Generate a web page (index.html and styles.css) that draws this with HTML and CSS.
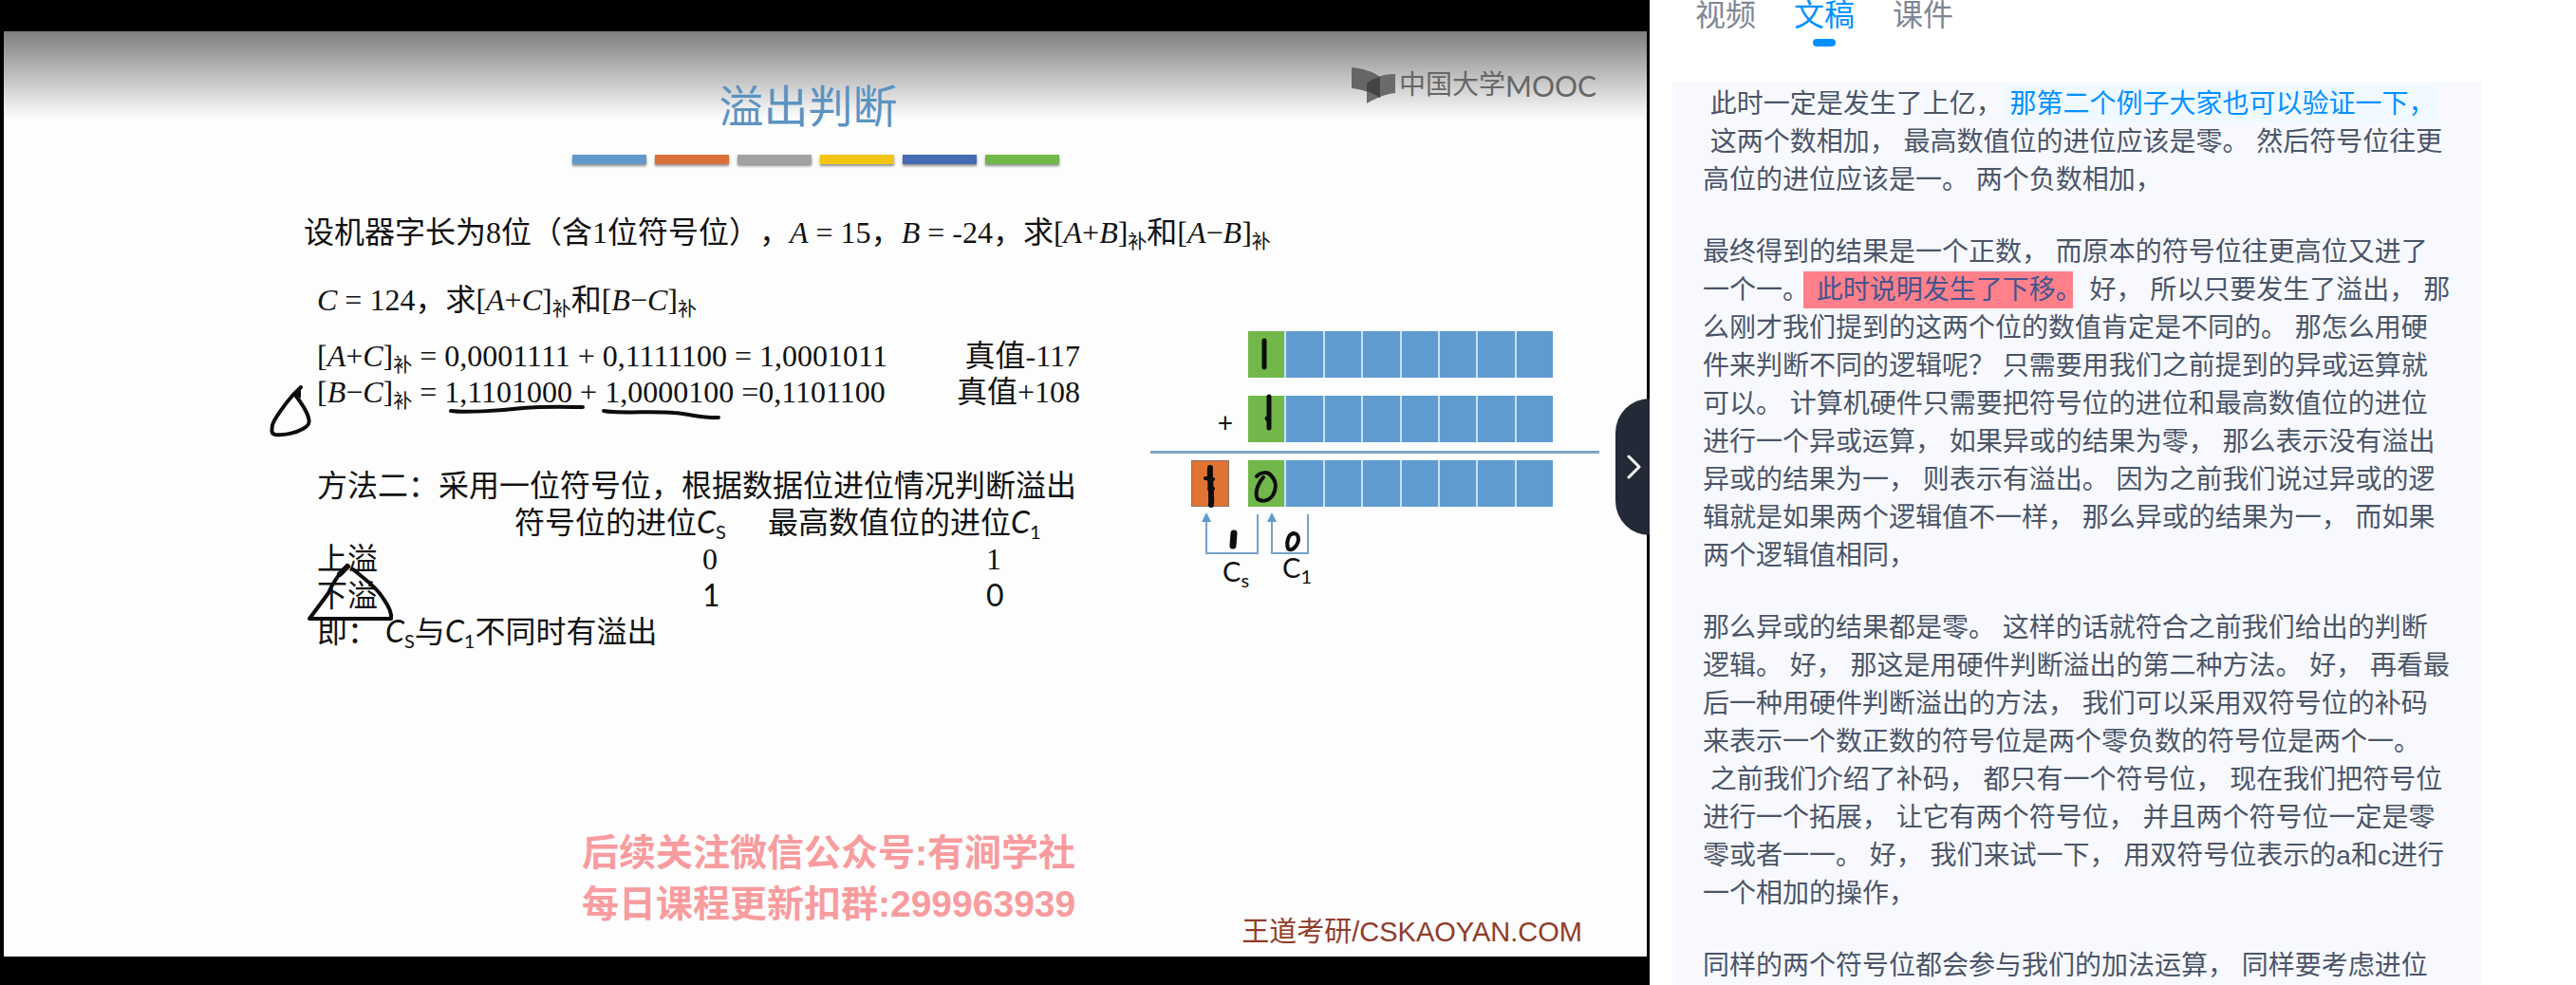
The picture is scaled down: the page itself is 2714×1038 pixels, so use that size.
FILE: index.html
```html
<!DOCTYPE html>
<html lang="zh-CN">
<head>
<meta charset="utf-8">
<title>溢出判断</title>
<link rel="stylesheet" href="styles.css">
</head>
<body>
<div class="page">
  <main class="stage">
    <article class="slide">
      <div class="shade"></div>
      <div class="watermark">
        <svg class="watermark-icon" width="46" height="38" viewBox="0 0 46 38" aria-hidden="true">
          <path d="M0 0C11 1 22 4 30 10V32C20 26 10 23 0 22Z" fill="#666"/>
          <path d="M16 38V17C24 10 34 7 46 7V27C36 28 26 32 16 38Z" fill="#6b6b6b"/>
          <path d="M16 17C20 13 25 11 30 10V32C26 29 21 27 16 25Z" fill="#444"/>
        </svg>
        <span class="watermark-cn">中国大学</span><span class="watermark-en">MOOC</span>
      </div>
      <header class="slide-head">
        <h1 class="title">溢出判断</h1>
        <div class="bars">
          <span class="bar bar-blue"></span><span class="bar bar-orange"></span><span class="bar bar-gray"></span><span class="bar bar-yellow"></span><span class="bar bar-navy"></span><span class="bar bar-green"></span>
        </div>
      </header>
      <p class="problem">设机器字长为8位（含1位符号位），<i>A</i> = 15，<i>B</i> = -24，求[<i>A</i>+<i>B</i>]<sub>补</sub>和[<i>A</i>−<i>B</i>]<sub>补</sub></p>
      <div class="work">
        <section class="notes">
          <p class="given"><i>C</i> = 124，求[<i>A</i>+<i>C</i>]<sub>补</sub>和[<i>B</i>−<i>C</i>]<sub>补</sub></p>
          <p class="equation"><span>[<i>A</i>+<i>C</i>]<sub>补</sub> = 0,0001111 + 0,1111100 = 1,0001011</span><span>真值-117</span></p>
          <p class="equation"><span>[<i>B</i>−<i>C</i>]<sub>补</sub> = 1,1101000 + 1,0000100 =0,1101100</span><span>真值+108</span></p>
          <p class="method">方法二：采用一位符号位，根据数据位进位情况判断溢出</p>
          <table class="carry">
            <thead>
              <tr><td class="kind"></td><th class="sign" scope="col">符号位的进位<i class="calibri">C</i><sub class="calibri">S</sub></th><th scope="col">最高数值位的进位<i class="calibri">C</i><sub class="calibri">1</sub></th></tr>
            </thead>
            <tbody>
              <tr><th scope="row">上溢</th><td class="cs">0</td><td class="c1">1</td></tr>
              <tr class="calibri"><th scope="row">下溢</th><td class="cs">1</td><td class="c1">0</td></tr>
            </tbody>
          </table>
          <p>即： <i class="calibri">C</i><sub class="calibri">S</sub>与<i class="calibri">C</i><sub class="calibri">1</sub>不同时有溢出</p>
          <svg class="ink ink-notes" width="860" height="400" viewBox="280 297 860 400" aria-hidden="true">
            <path d="M317 408L308 417C301 425 289 441 287 448C286 455 286 457 290 458C300 459 312 456 319 452C325 449 327 446 325 440C323 432 317 424 311 416M315 412V418"/>
            <path d="M475 433C490 435 525 433 551 430C575 428 600 429 614 429"/>
            <path d="M636 433C650 436 690 433 710 435C725 436 742 441 757 440"/>
            <path d="M366 597L357 606C353 612 350 615 346 625L326 652H412C413 646 409 638 404 631C398 621 388 613 383 609L372 600"/>
            <path d="M366 597L358 605" stroke-width="6"/>
          </svg>
        </section>
        <figure class="adder">
          <div class="adder-row">
            <div class="bits"><b class="sign-bit"></b><b></b><b></b><b></b><b></b><b></b><b></b><b></b></div>
          </div>
          <div class="adder-row">
            <span class="plus">+</span>
            <div class="bits"><b class="sign-bit"></b><b></b><b></b><b></b><b></b><b></b><b></b><b></b></div>
          </div>
          <hr class="sum-line">
          <div class="adder-row">
            <span class="carry-bit"></span>
            <div class="bits"><b class="sign-bit"></b><b></b><b></b><b></b><b></b><b></b><b></b><b></b></div>
          </div>
          <svg class="arrows" width="473" height="100" viewBox="1212 534 473 100">
            <g fill="none" stroke="#76a3cb" stroke-width="2"><path d="M1325 542V583H1271V548"/><path d="M1378 542V583H1340V548"/></g>
            <g fill="#5f9bcc"><path d="M1271 540L1276 550H1266Z"/><path d="M1340 540L1345 550H1335Z"/></g>
            <text x="1288" y="613">C<tspan dy="6" class="index">s</tspan></text>
            <text x="1351" y="609">C<tspan dy="6" class="index">1</tspan></text>
          </svg>
          <svg class="ink ink-adder" width="473" height="285" viewBox="1212 349 473 285" aria-hidden="true">
            <path d="M1332 359V387M1337 418V451M1335 441L1337 443" stroke-width="5"/>
            <path d="M1275 493C1274 505 1277 518 1276 532" stroke-width="6"/>
            <path d="M1270 504L1278 505M1274 515H1278"/>
            <path d="M1324 502C1328 497 1336 497 1339 501C1345 507 1345 515 1341 522C1337 528 1330 529 1325 526C1322 521 1324 511 1331 503"/>
            <path d="M1300 562L1299 575" stroke-width="7"/>
            <path d="M1363 562C1357 562 1355 573 1357 578C1360 582 1367 576 1368 569C1368 564 1366 561 1361 563"/>
          </svg>
        </figure>
      </div>
      <footer class="slide-foot">
        <p class="notice">后续关注微信公众号:有涧学社<br>每日课程更新扣群:299963939</p>
        <p class="brand">王道考研/CSKAOYAN.COM</p>
      </footer>
    </article>
    <button class="collapse" type="button" aria-label="收起">
      <svg width="15" height="26" viewBox="0 0 15 26" aria-hidden="true"><path d="M2 2L13 13L2 24"/></svg>
    </button>
  </main>
  <aside class="side">
    <nav class="tabs">
      <button class="tab" type="button">视频</button>
      <button class="tab tab-active" type="button">文稿</button>
      <button class="tab" type="button">课件</button>
    </nav>
    <div class="transcript">
<p> 此时一定是发生了上亿，<span class="current"> 那第二个例子大家也可以验证一下，</span>
 这两个数相加， 最高数值位的进位应该是零。 然后符号位往更
高位的进位应该是一。 两个负数相加，</p>
<p>最终得到的结果是一个正数， 而原本的符号位往更高位又进了
一个一。<mark> 此时说明发生了下移。</mark> 好， 所以只要发生了溢出， 那
么刚才我们提到的这两个位的数值肯定是不同的。 那怎么用硬
件来判断不同的逻辑呢？ 只需要用我们之前提到的异或运算就
可以。 计算机硬件只需要把符号位的进位和最高数值位的进位
进行一个异或运算， 如果异或的结果为零， 那么表示没有溢出
异或的结果为一， 则表示有溢出。 因为之前我们说过异或的逻
辑就是如果两个逻辑值不一样， 那么异或的结果为一， 而如果
两个逻辑值相同，</p>
<p>那么异或的结果都是零。 这样的话就符合之前我们给出的判断
逻辑。 好， 那这是用硬件判断溢出的第二种方法。 好， 再看最
后一种用硬件判断溢出的方法， 我们可以采用双符号位的补码
来表示一个数正数的符号位是两个零负数的符号位是两个一。
 之前我们介绍了补码， 都只有一个符号位， 现在我们把符号位
进行一个拓展， 让它有两个符号位， 并且两个符号位一定是零
零或者一一。 好， 我们来试一下， 用双符号位表示的a和c进行
一个相加的操作，</p>
<p>同样的两个符号位都会参与我们的加法运算， 同样要考虑进位</p>
    </div>
  </aside>
</div>
</body>
</html>
```
FILE: styles.css
```css
* { box-sizing: border-box; }
body {
  margin: 0;
  background: #fff;
  font-family: "Liberation Sans", "Noto Sans CJK SC", sans-serif;
  text-spacing-trim: space-all;
}
p, h1, figure { margin: 0; }
button { border: 0; padding: 0; background: none; font: inherit; cursor: pointer; }

.page {
  display: grid;
  grid-template-columns: minmax(0, 1fr) 976px;
  grid-template-rows: minmax(0, 1fr);
  height: 100vh;
  overflow: hidden;
}

/* video stage */
.stage {
  position: relative;
  display: flex;
  padding: 33px 3px 30px 4px;
  background: #000;
}
.slide {
  position: relative;
  flex: 1;
  display: flex;
  flex-direction: column;
  background: #fdfdfd;
  color: #111;
  font-family: "Liberation Serif", "Noto Sans CJK SC", serif;
  font-size: 32px;
  line-height: 38px;
}
.shade {
  position: absolute;
  inset: 0 0 auto;
  height: 92px;
  background: linear-gradient(rgba(0, 0, 0, .5), rgba(0, 0, 0, 0));
}
.watermark {
  position: absolute;
  top: 38px;
  right: 53px;
  display: flex;
  align-items: center;
  color: #666;
}
.watermark-icon { margin-right: 4px; }
.watermark-cn { font-size: 28px; }
.watermark-en { font-family: Lato, sans-serif; font-size: 30px; line-height: 34px; }

.slide-head {
  position: relative;
  display: flex;
  flex-direction: column;
  align-items: center;
  gap: 22px;
  padding: 52px 20px 0 0;
}
.title {
  padding-right: 16px;
  color: #5b93c2;
  font-size: 47px;
  font-weight: 400;
  line-height: 56px;
}
.bars { display: flex; gap: 9px; }
.bar { width: 78px; height: 10px; box-shadow: 0 2px 3px rgba(0, 0, 0, .45); }
.bar-blue { background: #6299cb; }
.bar-orange { background: #d9703a; }
.bar-gray { background: #a2a2a2; }
.bar-yellow { background: #f2c511; }
.bar-navy { background: #466ab3; }
.bar-green { background: #72b94c; }

sub { font-size: 20px; line-height: 0; vertical-align: -6px; }
.calibri { font-family: Lato, "Noto Sans CJK SC", sans-serif; }
.problem { margin: 53px 0 33px 316px; white-space: nowrap; }
.work {
  display: grid;
  grid-template-columns: 804px 473px;
  gap: 74px;
  padding-left: 330px;
}
.notes { position: relative; white-space: nowrap; }
.given { margin-bottom: 21px; }
.equation { display: flex; justify-content: space-between; }
.method { margin-top: 61px; }
.carry { border-collapse: collapse; }
.carry th, .carry td { height: 38px; padding: 0; font-weight: 400; text-align: left; }
.carry .kind { width: 208px; }
.carry .sign { width: 267px; }
.carry .cs { padding-left: 198px; }
.carry .c1 { padding-left: 230px; }

.ink {
  position: absolute;
  fill: none;
  stroke: #0c0c0c;
  stroke-width: 4;
  stroke-linecap: round;
  stroke-linejoin: round;
}
.ink-notes { top: 0; left: -54px; }
.ink-adder { top: 52px; left: 0; }

/* binary addition figure */
.adder { position: relative; padding-top: 52px; }
.adder-row { display: flex; justify-content: flex-end; align-items: center; padding-right: 49px; }
.adder-row + .adder-row { margin-top: 19px; }
.bits {
  display: grid;
  grid-template-columns: repeat(8, 1fr);
  gap: 2px;
  width: 321px;
  height: 49px;
  background: #c8e2f5;
}
.bits b { background: #609bd0; }
.bits .sign-bit { background: #72b74a; }
.plus { margin-right: 16px; padding-top: 6px; font-family: Lato, sans-serif; font-size: 28px; }
.sum-line { height: 3px; margin: 9px 0 7px; border: 0; background: #7ba6c9; }
.carry-bit { width: 40px; height: 49px; margin-right: 20px; border: 1px solid #8a7268; background: #e07333; }
.arrows { display: block; font-family: Lato, sans-serif; font-size: 29px; fill: #111; }
.arrows .index { font-size: 20px; }

.slide-foot {
  display: flex;
  justify-content: space-between;
  align-items: flex-end;
  margin-top: auto;
  padding: 0 68px 8px 609px;
  font-family: "Liberation Sans", "Noto Sans CJK SC", sans-serif;
}
.notice {
  padding-bottom: 20px;
  color: #f89c9f;
  font-size: 39px;
  font-weight: 700;
  line-height: 54px;
}
.brand { color: #8f3c2b; font-size: 29px; line-height: 36px; }

.collapse {
  position: absolute;
  top: 420px;
  right: 0;
  display: flex;
  justify-content: center;
  align-items: center;
  width: 36px;
  height: 144px;
  padding-left: 2px;
  border-radius: 36px 0 0 36px;
  background: #232937;
}
.collapse path { fill: none; stroke: #fff; stroke-width: 3; stroke-linecap: round; stroke-linejoin: round; }

/* transcript panel */
.side { padding: 0 100px 0 24px; background: #fff; overflow: hidden; }
.tabs { display: flex; gap: 40px; height: 86px; padding-left: 24px; }
.tab {
  position: relative;
  height: 50px;
  padding-bottom: 18px;
  color: #7f8795;
  font-size: 32px;
  line-height: 32px;
}
.tab-active { color: #0091ff; }
.tab-active::after {
  content: "";
  position: absolute;
  top: 41px;
  left: 20px;
  width: 24px;
  height: 8px;
  border-radius: 4px;
  background: #0091ff;
}
.transcript {
  padding: 4px 32px;
  background: #f8f9fe;
  color: #4a5568;
  font-size: 28px;
  line-height: 40px;
}
.transcript p { white-space: pre; }
.transcript p + p { margin-top: 36px; }
.current { padding: 4px 0; background: #f0f9ff; color: #0091ff; }
.transcript mark { position: relative; z-index: 0; background: none; color: #44558f; }
.transcript mark::before {
  content: "";
  position: absolute;
  z-index: -1;
  inset: -4px 10px -4px -6px;
  background: #ff808a;
}
```
